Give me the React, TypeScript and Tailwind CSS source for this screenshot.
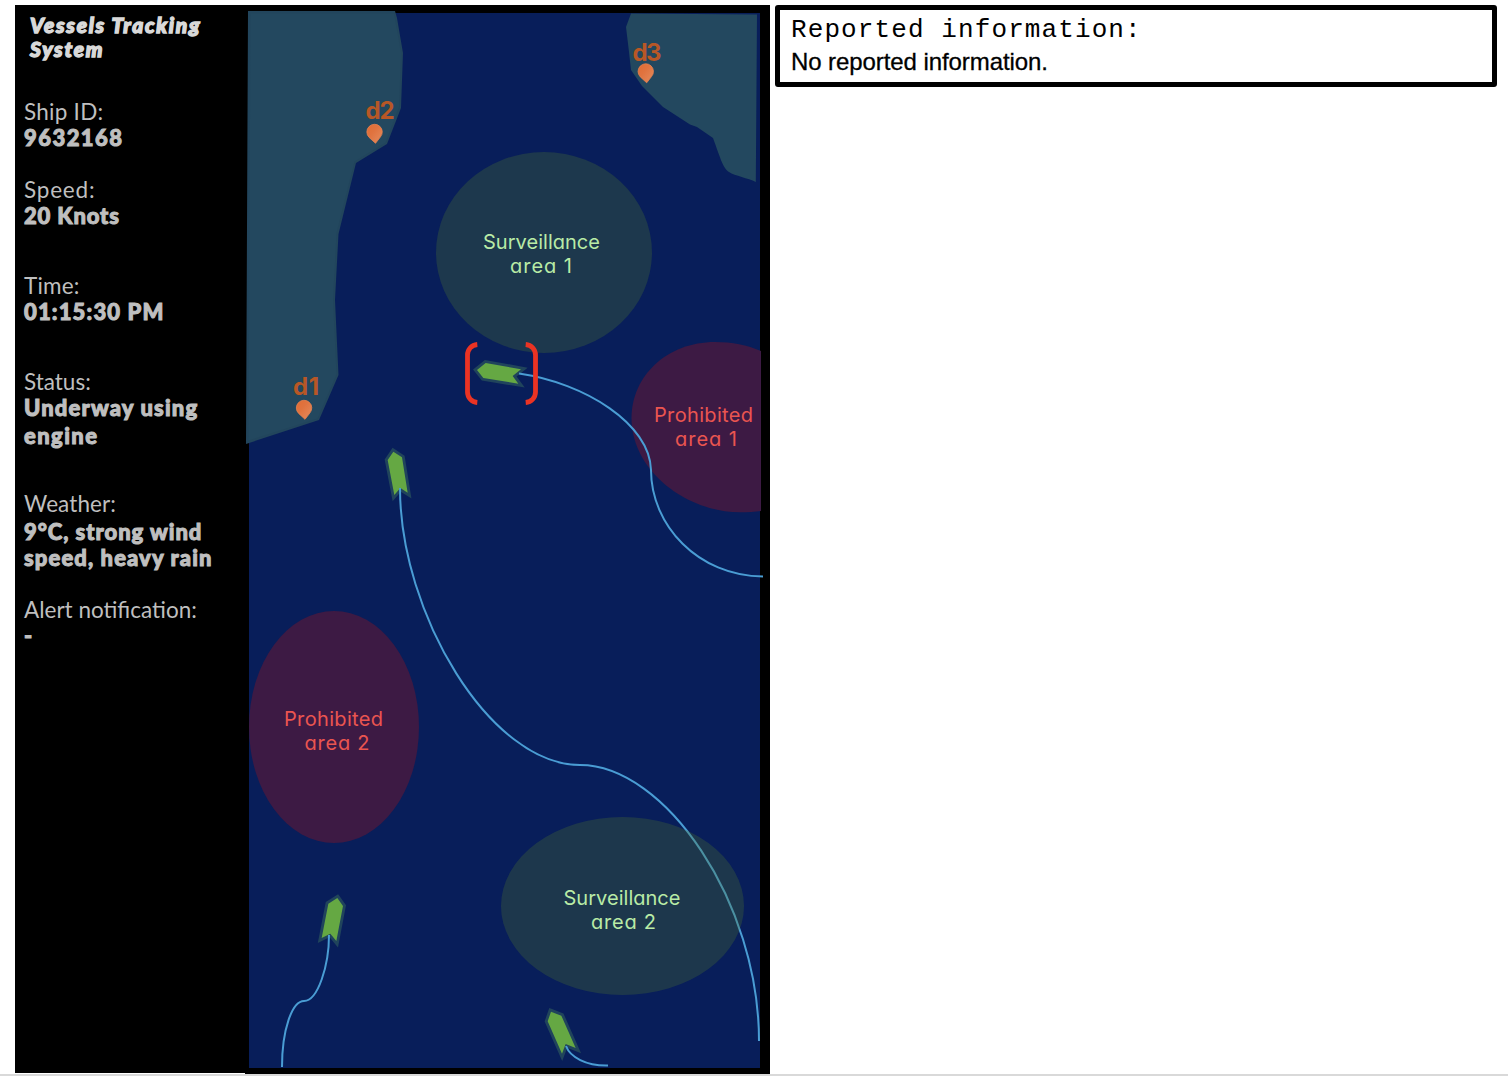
import React from "react";

type Line = { text: string; cls: string };
type Field = { label: Line; values: Line[]; gap: string };

const fields: Field[] = [
  {
    label: { text: "Ship ID:", cls: "tracking-[0.25px]" },
    values: [{ text: "9632168", cls: "tracking-[1.45px]" }],
    gap: "mb-[26px]",
  },
  {
    label: { text: "Speed:", cls: "tracking-[0.8px]" },
    values: [{ text: "20 Knots", cls: "tracking-[0.85px]" }],
    gap: "mb-[44px]",
  },
  {
    label: { text: "Time:", cls: "tracking-[0.2px]" },
    values: [{ text: "01:15:30 PM", cls: "tracking-[1.15px]" }],
    gap: "mb-[44px]",
  },
  {
    label: { text: "Status:", cls: "tracking-normal" },
    values: [
      { text: "Underway using", cls: "tracking-[1.15px]" },
      { text: "engine", cls: "mt-0.5 tracking-[1.4px]" },
    ],
    gap: "mb-[42px]",
  },
  {
    label: { text: "Weather:", cls: "tracking-[0.1px]" },
    values: [
      { text: "9°C, strong wind", cls: "mt-0.5 tracking-[0.95px]" },
      { text: "speed, heavy rain", cls: "tracking-[1.1px]" },
    ],
    gap: "mb-[26px]",
  },
  {
    label: { text: "Alert notification:", cls: "tracking-normal" },
    values: [{ text: "-", cls: "tracking-normal" }],
    gap: "",
  },
];

function Sidebar() {
  return (
    <aside className="w-[230px] shrink-0 pl-[9px] pt-[8px] font-['Lato',sans-serif] whitespace-nowrap text-[#bfbfbf]">
      <h1 className="mb-[38px] pl-[6px] text-[21px] leading-[24px] font-black tracking-[1.75px] text-[#d9d9d9] italic [-webkit-text-stroke:1.4px_#d9d9d9]">
        Vessels Tracking
        <br />
        System
      </h1>
      {fields.map((f) => (
        <div key={f.label.text} className={f.gap}>
          <div className={`text-[22.5px] leading-[26px] ${f.label.cls}`}>{f.label.text}</div>
          {f.values.map((v) => (
            <div
              key={v.text}
              className={`text-[22px] leading-[26px] font-black [-webkit-text-stroke:1px_#bfbfbf] ${v.cls}`}
            >
              {v.text}
            </div>
          ))}
        </div>
      ))}
    </aside>
  );
}

function Pin({ x, y, label, tx, ty }: { x: number; y: number; label: string; tx: number; ty: number }) {
  return (
    <g>
      <text
        x={tx}
        y={ty}
        fontSize="24"
        fontWeight="700"
        textLength={label === "d1" ? 26 : 29}
        fill="#b85726"
        className="font-['Inter',sans-serif]"
      >
        {label}
      </text>
      <path
        d="M1 11.3 L-5.4 5.4 A7.7 7.7 0 1 1 5.8 5.1 Z"
        transform={`translate(${x} ${y})`}
        fill="url(#pin)"
        stroke="#e8824f"
        strokeWidth="0.8"
      />
    </g>
  );
}

function AreaLabel({ x, y, lines, widths, fill }: { x: number[]; y: number; lines: string[]; widths: number[]; fill: string }) {
  return (
    <g fill={fill} fontSize="20" className="font-['Inter',sans-serif] [font-feature-settings:'cv11']">
      {lines.map((line, i) => (
        <text key={line} x={x[i]} y={y + i * 24} textLength={widths[i]}>
          {line}
        </text>
      ))}
    </g>
  );
}

const ships = [
  { x: 440, y: 320, points: "111,150 137,129 243,148 218,168 235,191 130,174" },
  { x: 240, y: 340, points: "460,335 486,352 503,458 481,444 463,465 443,360" },
  { x: 240, y: 880, points: "292,54 309,78 289,183 271,161 245,174 265,71" },
  { x: 520, y: 980, points: "93,95 124,107 167,204 137,192 126,221 83,124" },
];

function SeaMap() {
  return (
    <svg viewBox="245 5 525 1069" className="block h-[1069px] w-[525px] shrink-0 bg-black">
      <defs>
        <linearGradient id="pin" x1="0" y1="0" x2="1" y2="1">
          <stop offset="0" stopColor="#e06c34" />
          <stop offset="0.4" stopColor="#e0733f" />
          <stop offset="1" stopColor="#e58c5e" />
        </linearGradient>
      </defs>
      <rect x="249" y="13" width="511" height="1055" fill="#081e5a" />

      <path
        d="M248 11 H395 L397 18 L403 53 L401 108 L387 144 L356 163 L338.500 234 L335 300 L338.500 375 L319 420 L246 444 Z"
        fill="#22455c"
      />
      <path
        d="M250.500 13.500 H394 L401 53 L399 107 L385.500 142.500 L354.500 161.500 L336.500 233 L333 300 L336.500 374.500 L317.500 418.500 L248.500 440.500 Z"
        fill="#23485f"
      />
      <path
        d="M631 13.500 L757 14.500 L755.800 182 C748 178 735 176 729 172 C723 168 721 160 713 138 L697 127 L690 124.500 L663 107 L642 86 L631 70 L629 52 L626 27 Z"
        fill="#23485f"
      />

      <ellipse cx="544" cy="252.500" rx="108" ry="100.500" fill="#1d384d" />
      <path
        d="M761 351 C747 345 732 342 715 342 C667 342 631.500 376 631.500 418 C631.500 470 685 512 740 512.300 C748 512.300 755 512 761 511 Z"
        fill="#3d1a44"
      />
      <ellipse cx="334" cy="727" rx="85" ry="116" fill="#3d1a44" />

      {ships.map((s) => (
        <g key={s.points} transform={`translate(${s.x} ${s.y}) scale(0.33333)`}>
          <polygon points={s.points} fill="#65a843" stroke="#20445c" strokeWidth="17" strokeMiterlimit="8" className="[paint-order:stroke]" />
        </g>
      ))}

      <g fill="none" stroke="#4a9dd4" strokeWidth="2">
        <path d="M519 373.500 C585 383 650 424 651 470 C651 525 698 576 763 576.500" />
        <path d="M400 488 C400 613 490 765 580 765 C665 765 759 902 759 1041" />
        <path d="M329 935 C329 965 318 1001 304 1001 C292 1001 282 1030 282 1067" />
        <path d="M566 1046 C570 1057 586 1066 608 1065.500" />
      </g>
      <ellipse cx="622.500" cy="906" rx="121.500" ry="89" fill="#4e752f" fillOpacity="0.3" />

      <g fill="none" stroke="#eb3323" strokeWidth="4.800">
        <path d="M477.300 344.500 C471.500 345 467.500 349.500 467.500 355 V392 C467.500 397.500 471.500 402 477.300 402.500" />
        <path d="M525.700 344.500 C531.500 345 535.500 349.500 535.500 355 V392 C535.500 397.500 531.500 402 525.700 402.500" />
      </g>

      <Pin x={304} y={408} label="d1" tx={293} ty={395} />
      <Pin x={374.500} y={132} label="d2" tx={365.500} ty={119} />
      <Pin x={645.700} y={71.500} label="d3" tx={632.500} ty={61} />

      <AreaLabel x={[483, 510]} y={249} lines={["Surveillance", "area 1"]} widths={[117, 62]} fill="#b9eba6" />
      <AreaLabel x={[654, 675]} y={422} lines={["Prohibited", "area 1"]} widths={[99, 62]} fill="#ea5550" />
      <AreaLabel x={[284, 304.5]} y={726} lines={["Prohibited", "area 2"]} widths={[99, 65]} fill="#ea5550" />
      <AreaLabel x={[563.5, 591]} y={905} lines={["Surveillance", "area 2"]} widths={[117, 65]} fill="#b9eba6" />
    </svg>
  );
}

export default function App() {
  return (
    <div className="flex h-[1076px] w-[1508px] flex-col overflow-hidden border-b-2 border-[#d9d9d9] bg-white pt-[5px] pl-[15px]">
      <div className="flex items-start gap-[5px]">
        <main className="flex h-[1068px] w-[755px] bg-black">
          <Sidebar />
          <SeaMap />
        </main>
        <section className="h-[82px] w-[722px] rounded-[3px] border-[5px] border-black bg-white pl-[11px] pt-[5px] whitespace-nowrap text-black">
          <h2 className="font-['Liberation_Mono',monospace] text-[26px] leading-[31px] tracking-[1.1px]">
            Reported information:
          </h2>
          <p className="font-['Liberation_Sans',sans-serif] text-[24px] leading-[32px] tracking-[-0.08px] [-webkit-text-stroke:0.3px_black]">
            No reported information.
          </p>
        </section>
      </div>
    </div>
  );
}
